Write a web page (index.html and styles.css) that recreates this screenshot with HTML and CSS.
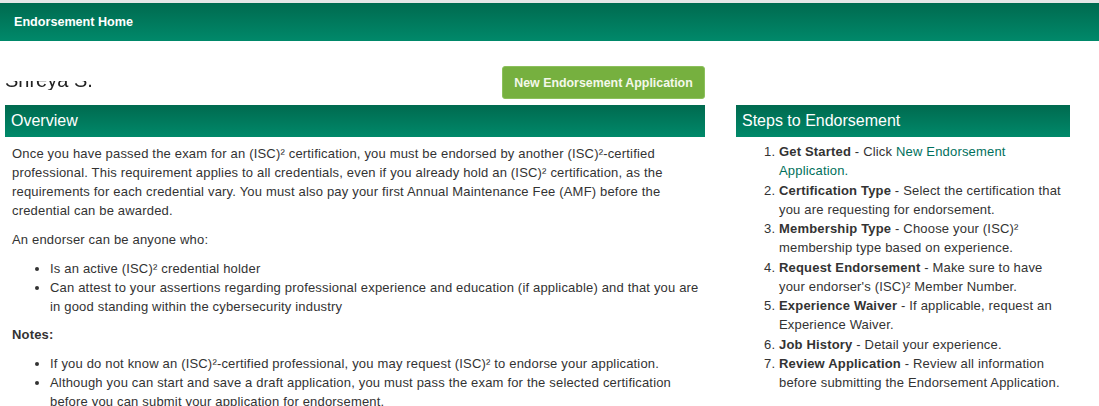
FILE: index.html
```html
<!DOCTYPE html>
<html>
<head>
<meta charset="utf-8">
<link rel="stylesheet" href="styles.css">
</head>
<body>
<div class="topline"></div>
<header class="navbar">Endorsement Home</header>
<main class="page">
  <section class="main-col">
    <div class="toprow">
      <div class="name"><span>Shreya S.</span></div>
      <button class="btn">New Endorsement Application</button>
    </div>
    <h2 class="panel-title">Overview</h2>
    <div class="panel-body">
      <p>Once you have passed the exam for an (ISC)² certification, you must be endorsed by another (ISC)²-certified professional. This requirement applies to all credentials, even if you already hold an (ISC)² certification, as the requirements for each credential vary. You must also pay your first Annual Maintenance Fee (AMF) before the credential can be awarded.</p>
      <p>An endorser can be anyone who:</p>
      <ul>
        <li>Is an active (ISC)² credential holder</li>
        <li>Can attest to your assertions regarding professional experience and education (if applicable) and that you are in good standing within the cybersecurity industry</li>
      </ul>
      <p class="notes">Notes:</p>
      <ul>
        <li>If you do not know an (ISC)²-certified professional, you may request (ISC)² to endorse your application.</li>
        <li>Although you can start and save a draft application, you must pass the exam for the selected certification before you can submit your application for endorsement.</li>
      </ul>
    </div>
  </section>
  <aside class="side-col">
    <h2 class="panel-title">Steps to Endorsement</h2>
    <ol class="steps">
      <li><b>Get Started</b> - Click <a class="link">New Endorsement Application.</a></li>
      <li><b>Certification Type</b> - Select the certification that you are requesting for endorsement.</li>
      <li><b>Membership Type</b> - Choose your (ISC)² membership type based on experience.</li>
      <li><b>Request Endorsement</b> - Make sure to have your endorser's (ISC)² Member Number.</li>
      <li><b>Experience Waiver</b> - If applicable, request an Experience Waiver.</li>
      <li><b>Job History</b> - Detail your experience.</li>
      <li><b>Review Application</b> - Review all information before submitting the Endorsement Application.</li>
    </ol>
  </aside>
</main>
</body>
</html>
```

FILE: styles.css
```css
* { box-sizing: border-box; }
html, body { margin: 0; padding: 0; background: #fff; }
body {
  font-family: "Liberation Sans", Arial, sans-serif;
  font-size: 13px;
  color: #333;
  overflow: hidden;
}
.topline { height: 3px; background: #e6e6e6; }
.navbar {
  height: 38px;
  background: linear-gradient(to bottom, #006a4f, #00896a);
  color: #fff;
  font-weight: bold;
  font-size: 12.6px;
  line-height: 38px;
  padding-left: 14px;
}
.page {
  display: flex;
  gap: 31px;
  padding-left: 5px;
}
.main-col { width: 700px; }
.side-col { width: 334px; padding-top: 64px; }
.toprow {
  display: flex;
  justify-content: space-between;
  align-items: flex-end;
  padding-top: 25px;
  margin-bottom: 6px;
}
.name {
  height: 9px;
  overflow: hidden;
  margin-bottom: 9px;
}
.name span {
  display: block;
  margin-top: -12px;
  font-size: 20px;
  line-height: 22px;
  color: #222;
  filter: blur(0.5px);
}
.btn {
  font-family: "Liberation Sans", Arial, sans-serif;
  font-weight: bold;
  font-size: 12.4px;
  color: #f4f8ea;
  background: #76b03f;
  border: 1px solid #8cc05c;
  border-radius: 3px;
  height: 33px;
  width: 203px;
  padding: 0;
  cursor: pointer;
}
.panel-title {
  margin: 0;
  height: 32px;
  line-height: 32px;
  background: linear-gradient(to bottom, #006a4f, #00896a);
  color: #fff;
  font-weight: normal;
  font-size: 16px;
  padding-left: 6px;
}
.panel-body { padding: 0 0 0 7px; letter-spacing: 0.18px; }
.panel-body p { margin: 7px 0 10px; line-height: 19px; }
.panel-body p + p { margin-top: 10px; }
.panel-body ul { margin: 9px 0 9px; padding-left: 38px; line-height: 19px; }
.notes { font-weight: bold; }
.steps {
  margin: 5px 0 0;
  padding-left: 43px;
  line-height: 19.25px;
  letter-spacing: 0.18px;
}
.steps b { font-weight: bold; color: #333; }
.link { color: #00705c; text-decoration: none; }
```
